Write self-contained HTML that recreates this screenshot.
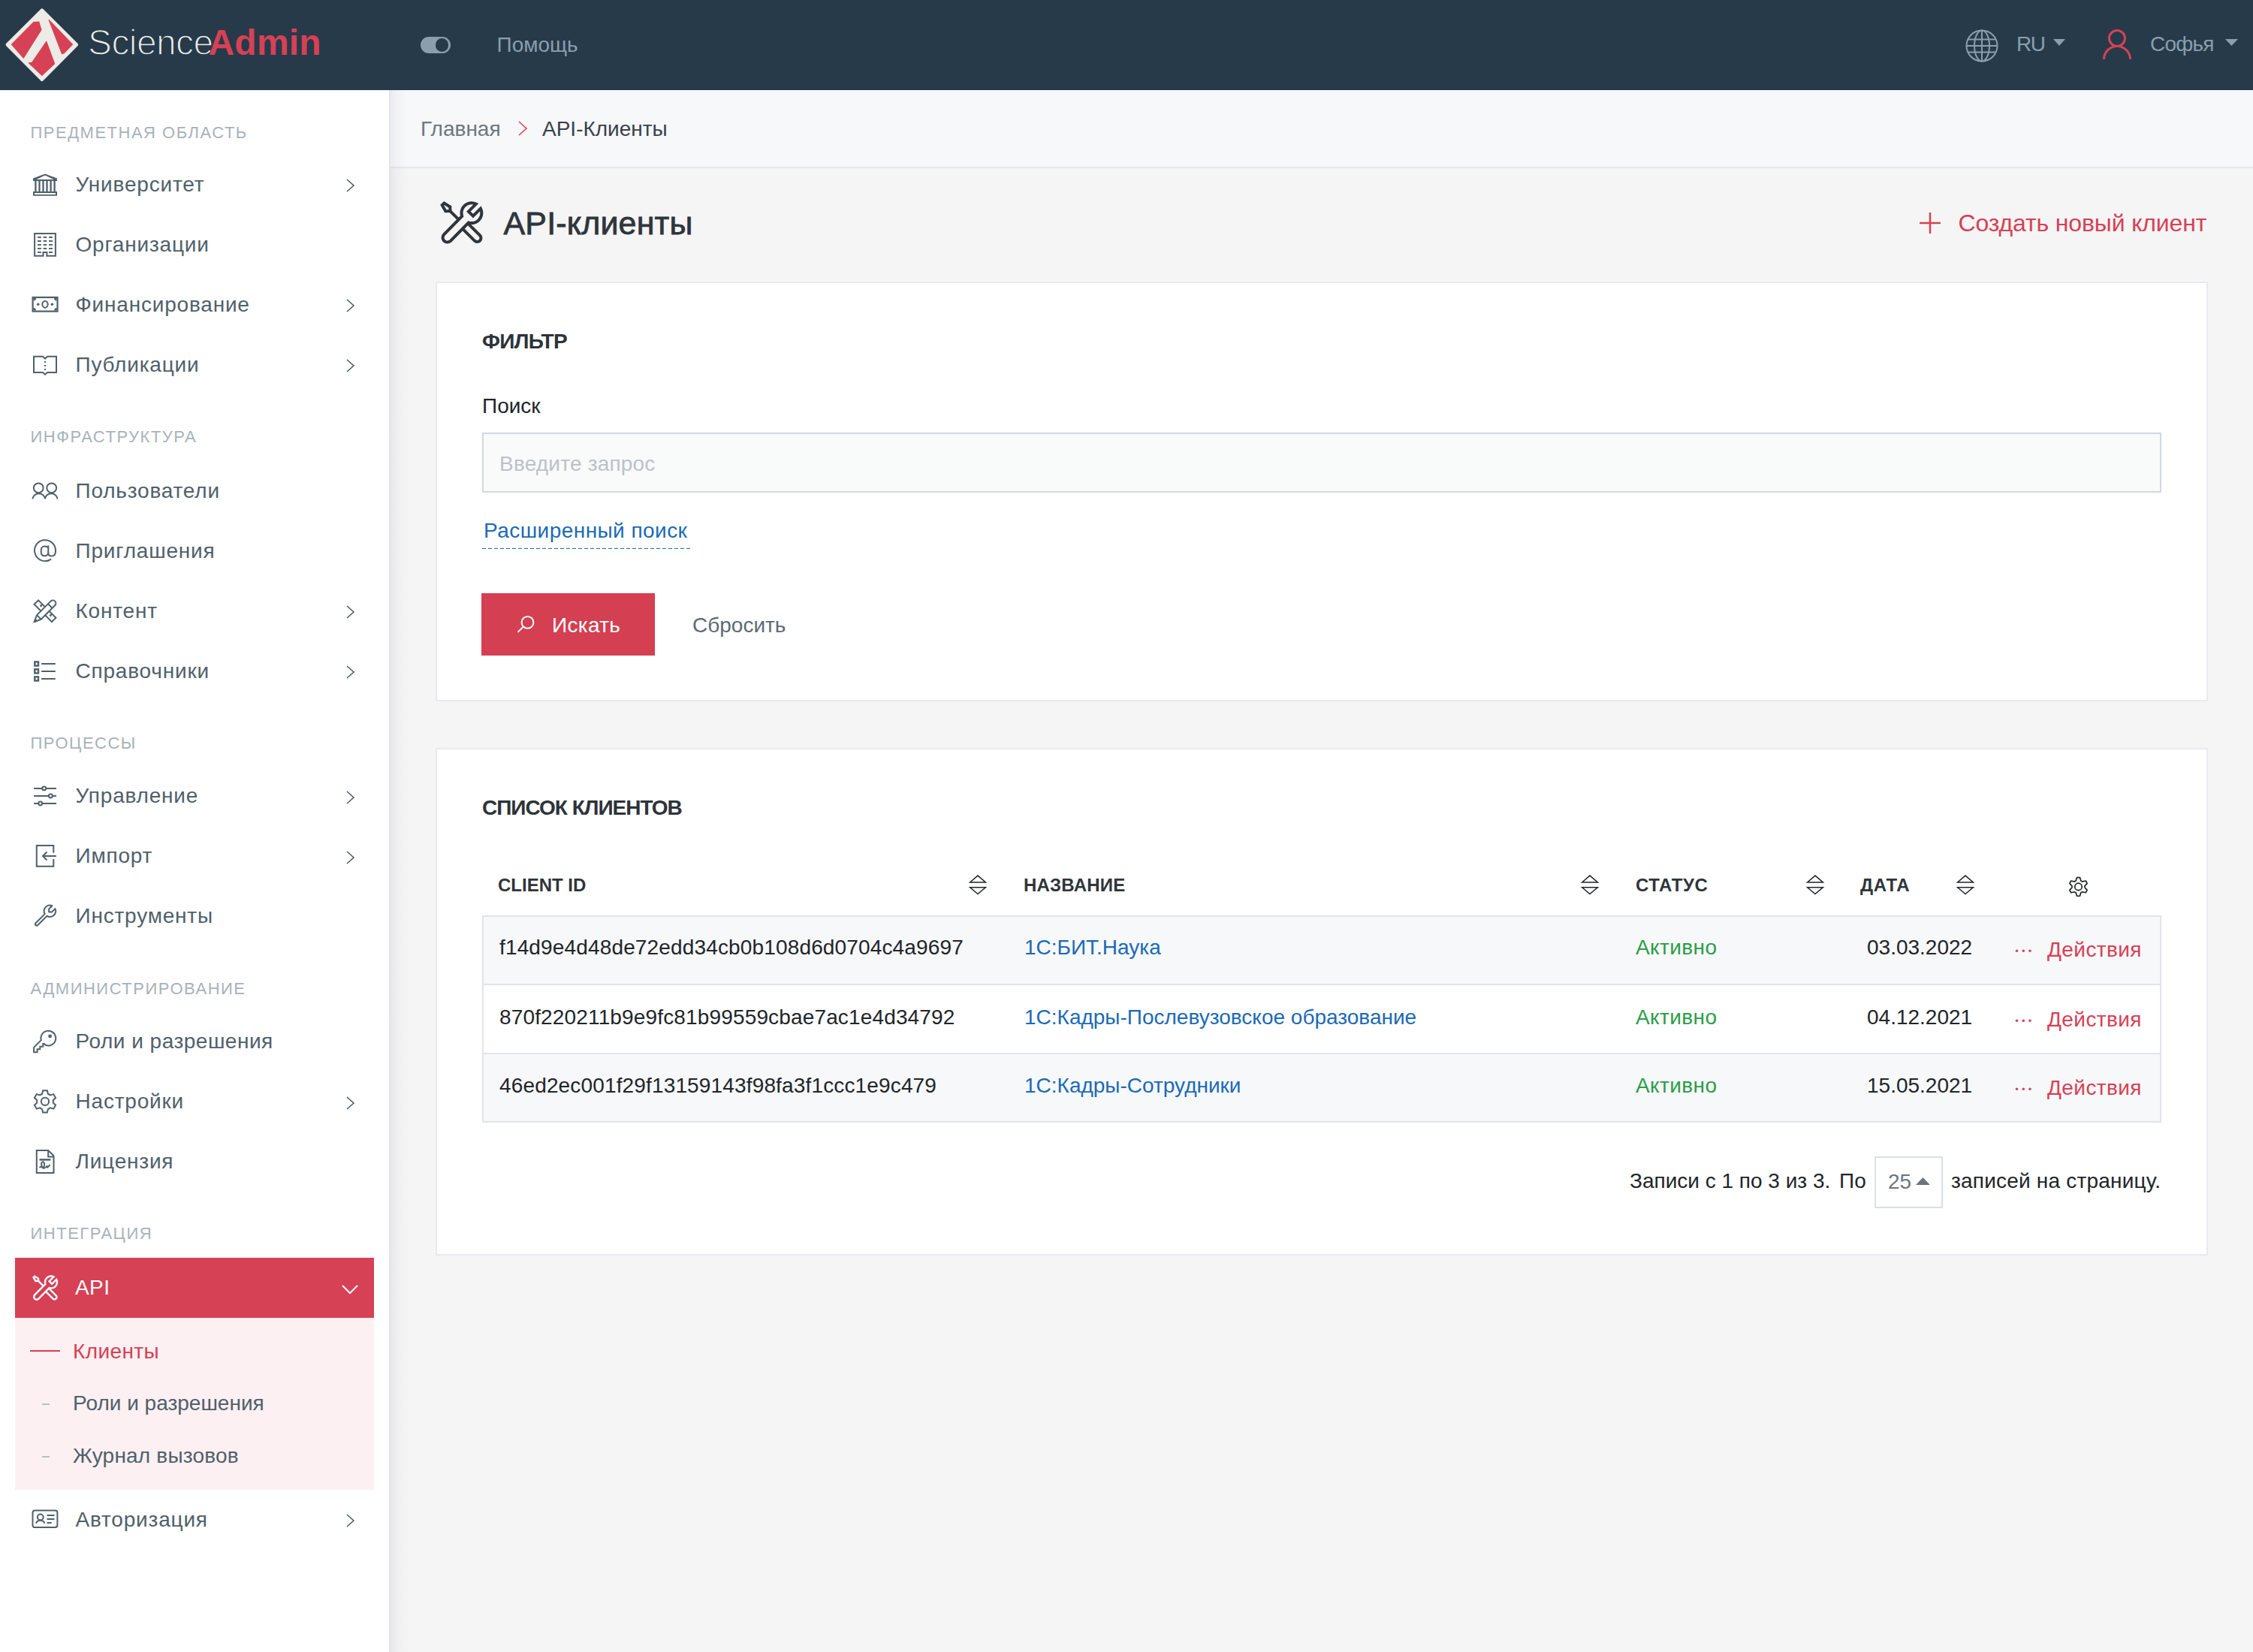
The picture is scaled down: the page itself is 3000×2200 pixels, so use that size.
<!DOCTYPE html>
<html><head><meta charset="utf-8"><style>
html,body{margin:0;padding:0;width:3000px;height:2200px;overflow:hidden;background:#f5f5f6}
body{position:relative;font-family:"Liberation Sans", sans-serif}
.t{position:absolute;white-space:nowrap;line-height:1;font-family:"Liberation Sans", sans-serif}
svg{overflow:visible}
</style></head><body>
<div style="position:absolute;left:0px;top:0px;width:3000px;height:2200px;background:#f5f5f5"></div>
<div style="position:absolute;left:0px;top:0px;width:3000px;height:120px;background:#263a4a"></div>
<div style="position:absolute;left:0px;top:120px;width:518px;height:2080px;background:#ffffff"></div>
<div style="position:absolute;left:520px;top:120px;width:2480px;height:102px;background:#f7f8fa"></div>
<div style="position:absolute;left:520px;top:222px;width:2480px;height:2px;background:#e6e8ef"></div>
<svg style="position:absolute;left:0px;top:0px;" width="112" height="120" viewBox="0 0 112 120"><path d="M55.9 14 L101.6 59.5 L55.9 105.6 L10.1 59.5 Z" fill="#ecebe6" stroke="#ecebe6" stroke-width="5" stroke-linejoin="round"/><g fill="#d64155" stroke="#d64155" stroke-width="1.2" stroke-linejoin="round"><path d="M15.5 59.2 L44.8 29.6 L51.8 29.2 L54.9 39.6 L31.3 77.2 Z"/><path d="M65.2 26.6 L96.5 59.2 L85.4 70.6 L82.6 71.8 Z"/><path d="M61.8 55.4 L72.6 84.8 L55.9 100.4 L38.4 83.9 L42.6 83.4 Z"/></g></svg>
<div class="t" style="left:117px;top:33.4px;font-size:48px;color:#ecebe6;font-weight:400;letter-spacing:-0.6px;-webkit-text-stroke:1.5px #263a4a">Science</div>
<div class="t" style="left:277.5px;top:33.4px;font-size:48px;color:#d64155;font-weight:700;letter-spacing:0.2px;">Admin</div>
<div style="position:absolute;left:560px;top:49px;width:40px;height:22px;background:#8a9eae;border-radius:11px"></div>
<div style="position:absolute;left:579.8px;top:51px;width:17.5px;height:17.5px;background:#263a4a;border-radius:50%"></div>
<div class="t" style="left:661.5px;top:45.5px;font-size:28px;color:#8a9eae;font-weight:400;letter-spacing:0px;">Помощь</div>
<svg style="position:absolute;left:2617px;top:39px;" width="44" height="44" viewBox="0 0 44 44"><g fill="none" stroke="#8a9eae" stroke-width="2"><circle cx="22" cy="22" r="20.5"/><ellipse cx="22" cy="22" rx="10" ry="20.5"/><line x1="22" y1="1.5" x2="22" y2="42.5"/><line x1="1.5" y1="22" x2="42.5" y2="22"/><line x1="3.5" y1="13.5" x2="40.5" y2="13.5"/><line x1="3.5" y1="30.5" x2="40.5" y2="30.5"/></g></svg>
<div class="t" style="left:2685px;top:45.3px;font-size:28px;color:#8a9eae;font-weight:400;letter-spacing:-1.5px;">RU</div>
<svg style="position:absolute;left:2734px;top:52px;" width="16" height="9" viewBox="0 0 16 9"><path d="M0 0 H16 L8 9 Z" fill="#8a9eae"/></svg>
<svg style="position:absolute;left:2800px;top:39px;" width="38" height="40" viewBox="0 0 38 40"><g fill="none" stroke="#d64155" stroke-width="3"><circle cx="19" cy="12" r="10.5"/><path d="M1.5 40 A17.5 17.5 0 0 1 36.5 40"/></g></svg>
<div class="t" style="left:2863px;top:45.3px;font-size:28px;color:#8a9eae;font-weight:400;letter-spacing:-0.8px;">Софья</div>
<svg style="position:absolute;left:2963px;top:52px;" width="17" height="9" viewBox="0 0 17 9"><path d="M0 0 H17 L8.5 9 Z" fill="#8a9eae"/></svg>
<div class="t" style="left:40.5px;top:165.7px;font-size:22px;color:#a8b2ba;font-weight:400;letter-spacing:1.5px;">ПРЕДМЕТНАЯ ОБЛАСТЬ</div>
<div class="t" style="left:100.5px;top:231.7px;font-size:28px;color:#50606b;font-weight:400;letter-spacing:0.8px;">Университет</div>
<svg style="position:absolute;left:460px;top:238.4px;" width="14" height="18" viewBox="0 0 14 18"><path d="M2 1 L11 9 L2 17" fill="none" stroke="#50606b" stroke-width="1.6"/></svg>
<div class="t" style="left:100.5px;top:311.7px;font-size:28px;color:#50606b;font-weight:400;letter-spacing:0.8px;">Организации</div>
<div class="t" style="left:100.5px;top:391.7px;font-size:28px;color:#50606b;font-weight:400;letter-spacing:0.8px;">Финансирование</div>
<svg style="position:absolute;left:460px;top:398.4px;" width="14" height="18" viewBox="0 0 14 18"><path d="M2 1 L11 9 L2 17" fill="none" stroke="#50606b" stroke-width="1.6"/></svg>
<div class="t" style="left:100.5px;top:471.7px;font-size:28px;color:#50606b;font-weight:400;letter-spacing:0.8px;">Публикации</div>
<svg style="position:absolute;left:460px;top:478.4px;" width="14" height="18" viewBox="0 0 14 18"><path d="M2 1 L11 9 L2 17" fill="none" stroke="#50606b" stroke-width="1.6"/></svg>
<div class="t" style="left:40.5px;top:571.0px;font-size:22px;color:#a8b2ba;font-weight:400;letter-spacing:1.5px;">ИНФРАСТРУКТУРА</div>
<div class="t" style="left:100.5px;top:639.7px;font-size:28px;color:#50606b;font-weight:400;letter-spacing:0.8px;">Пользователи</div>
<div class="t" style="left:100.5px;top:719.7px;font-size:28px;color:#50606b;font-weight:400;letter-spacing:0.8px;">Приглашения</div>
<div class="t" style="left:100.5px;top:799.7px;font-size:28px;color:#50606b;font-weight:400;letter-spacing:0.8px;">Контент</div>
<svg style="position:absolute;left:460px;top:806.4px;" width="14" height="18" viewBox="0 0 14 18"><path d="M2 1 L11 9 L2 17" fill="none" stroke="#50606b" stroke-width="1.6"/></svg>
<div class="t" style="left:100.5px;top:879.7px;font-size:28px;color:#50606b;font-weight:400;letter-spacing:0.8px;">Справочники</div>
<svg style="position:absolute;left:460px;top:886.4px;" width="14" height="18" viewBox="0 0 14 18"><path d="M2 1 L11 9 L2 17" fill="none" stroke="#50606b" stroke-width="1.6"/></svg>
<div class="t" style="left:40.5px;top:979.1px;font-size:22px;color:#a8b2ba;font-weight:400;letter-spacing:1.5px;">ПРОЦЕССЫ</div>
<div class="t" style="left:100.5px;top:1045.9px;font-size:28px;color:#50606b;font-weight:400;letter-spacing:0.8px;">Управление</div>
<svg style="position:absolute;left:460px;top:1052.6px;" width="14" height="18" viewBox="0 0 14 18"><path d="M2 1 L11 9 L2 17" fill="none" stroke="#50606b" stroke-width="1.6"/></svg>
<div class="t" style="left:100.5px;top:1125.9px;font-size:28px;color:#50606b;font-weight:400;letter-spacing:0.8px;">Импорт</div>
<svg style="position:absolute;left:460px;top:1132.6px;" width="14" height="18" viewBox="0 0 14 18"><path d="M2 1 L11 9 L2 17" fill="none" stroke="#50606b" stroke-width="1.6"/></svg>
<div class="t" style="left:100.5px;top:1205.9px;font-size:28px;color:#50606b;font-weight:400;letter-spacing:0.8px;">Инструменты</div>
<div class="t" style="left:40.5px;top:1306.4px;font-size:22px;color:#a8b2ba;font-weight:400;letter-spacing:1.5px;">АДМИНИСТРИРОВАНИЕ</div>
<div class="t" style="left:100.5px;top:1372.9px;font-size:28px;color:#50606b;font-weight:400;letter-spacing:0.5px;">Роли и разрешения</div>
<div class="t" style="left:100.5px;top:1452.9px;font-size:28px;color:#50606b;font-weight:400;letter-spacing:0.8px;">Настройки</div>
<svg style="position:absolute;left:460px;top:1459.6px;" width="14" height="18" viewBox="0 0 14 18"><path d="M2 1 L11 9 L2 17" fill="none" stroke="#50606b" stroke-width="1.6"/></svg>
<div class="t" style="left:100.5px;top:1532.9px;font-size:28px;color:#50606b;font-weight:400;letter-spacing:0.8px;">Лицензия</div>
<div class="t" style="left:40.5px;top:1631.9px;font-size:22px;color:#a8b2ba;font-weight:400;letter-spacing:1.5px;">ИНТЕГРАЦИЯ</div>
<div style="position:absolute;left:20px;top:1675px;width:478px;height:80px;background:#d64155"></div>
<div class="t" style="left:100px;top:1701.2px;font-size:28px;color:#ffffff;font-weight:400;letter-spacing:0.4px;">API</div>
<svg style="position:absolute;left:455px;top:1711px;" width="22" height="13" viewBox="0 0 22 13"><path d="M1 1 L11 11 L21 1" fill="none" stroke="#fff" stroke-width="2"/></svg>
<div style="position:absolute;left:20px;top:1755px;width:478px;height:229px;background:#fdf0f2"></div>
<div style="position:absolute;left:40px;top:1797.5px;width:40px;height:2.5px;background:#d64155"></div>
<div class="t" style="left:97px;top:1786.3px;font-size:28px;color:#d64155;font-weight:400;letter-spacing:0.4px;">Клиенты</div>
<div style="position:absolute;left:56px;top:1868.5px;width:10px;height:2px;background:#b7bfc5"></div>
<div class="t" style="left:97px;top:1854.8px;font-size:28px;color:#50606b;font-weight:400;letter-spacing:0px;">Роли и разрешения</div>
<div style="position:absolute;left:56px;top:1938.5px;width:10px;height:2px;background:#b7bfc5"></div>
<div class="t" style="left:97px;top:1924.9px;font-size:28px;color:#50606b;font-weight:400;letter-spacing:0.2px;">Журнал вызовов</div>
<div class="t" style="left:100.5px;top:2009.6px;font-size:28px;color:#50606b;font-weight:400;letter-spacing:0.8px;">Авторизация</div>
<svg style="position:absolute;left:460px;top:2016.3px;" width="14" height="18" viewBox="0 0 14 18"><path d="M2 1 L11 9 L2 17" fill="none" stroke="#50606b" stroke-width="1.6"/></svg>
<div class="t" style="left:560px;top:157.7px;font-size:28px;color:#6c7780;font-weight:400;letter-spacing:0px;">Главная</div>
<svg style="position:absolute;left:689px;top:161px;" width="14" height="20" viewBox="0 0 14 20"><path d="M2 1 L12 10 L2 19" fill="none" stroke="#d64155" stroke-width="1.6"/></svg>
<div class="t" style="left:722px;top:157.7px;font-size:28px;color:#37424b;font-weight:400;letter-spacing:0px;">API-Клиенты</div>
<div class="t" style="left:670.5px;top:276.0px;font-size:43px;color:#2f353b;font-weight:400;letter-spacing:0.15px;-webkit-text-stroke:0.8px #2f353b">API-клиенты</div>
<div class="t" style="left:2607.5px;top:280.7px;font-size:32px;color:#d64155;font-weight:400;letter-spacing:-0.15px;">Создать новый клиент</div>
<svg style="position:absolute;left:2556px;top:283px;" width="28" height="28" viewBox="0 0 28 28"><path d="M14 0 V28 M0 14 H28" stroke="#d64155" stroke-width="2.5"/></svg>
<div style="position:absolute;left:580px;top:375px;width:2360px;height:559px;background:#fff;border:2px solid #e9e9f1;box-sizing:border-box"></div>
<div class="t" style="left:642px;top:440.9px;font-size:28px;color:#2d3339;font-weight:700;letter-spacing:-0.6px;">ФИЛЬТР</div>
<div class="t" style="left:642px;top:526.6px;font-size:28px;color:#212529;font-weight:400;letter-spacing:0px;">Поиск</div>
<div style="position:absolute;left:642px;top:576px;width:2236px;height:80px;background:#f9fafa;border:2px solid #d1d8df;box-sizing:border-box"></div>
<div class="t" style="left:665px;top:604.3px;font-size:28px;color:#bcc2c8;font-weight:400;letter-spacing:0.2px;">Введите запрос</div>
<div class="t" style="left:644px;top:693.3px;font-size:28px;color:#1b6ab5;font-weight:400;letter-spacing:0.45px;">Расширенный поиск</div>
<div style="position:absolute;left:642px;top:729.6px;width:277px;height:1.6px;background:repeating-linear-gradient(90deg,#1b6ab5 0 4.6px,transparent 4.6px 8px)"></div>
<div style="position:absolute;left:641px;top:790px;width:231px;height:83px;background:#d43f52"></div>
<svg style="position:absolute;left:686px;top:820px;" width="26" height="24" viewBox="0 0 26 24"><g fill="none" stroke="#fff" stroke-width="2"><circle cx="16.5" cy="8.9" r="7.9"/><path d="M10.8 14.6 L3.5 21.9"/></g></svg>
<div class="t" style="left:735px;top:819.1px;font-size:28px;color:#ffffff;font-weight:400;letter-spacing:0.3px;">Искать</div>
<div class="t" style="left:922px;top:819.1px;font-size:28px;color:#5d6a74;font-weight:400;letter-spacing:0px;">Сбросить</div>
<div style="position:absolute;left:580px;top:996px;width:2360px;height:676px;background:#fff;border:2px solid #e9e9f1;box-sizing:border-box"></div>
<div class="t" style="left:642px;top:1061.7px;font-size:28px;color:#2d3339;font-weight:700;letter-spacing:-1px;">СПИСОК КЛИЕНТОВ</div>
<div class="t" style="left:663px;top:1166.7px;font-size:24px;color:#2f353b;font-weight:700;letter-spacing:0px;">CLIENT ID</div>
<svg style="position:absolute;left:1290px;top:1164px;" width="24" height="28" viewBox="0 0 24 28"><g fill="none" stroke="#212529" stroke-width="1.5"><path d="M1.6 11 L12 2.1 L22.4 11 Z"/><path d="M1.6 17.7 L12 26.6 L22.4 17.7 Z"/></g></svg>
<div class="t" style="left:1363px;top:1166.7px;font-size:24px;color:#2f353b;font-weight:700;letter-spacing:0.2px;">НАЗВАНИЕ</div>
<svg style="position:absolute;left:2105px;top:1164px;" width="24" height="28" viewBox="0 0 24 28"><g fill="none" stroke="#212529" stroke-width="1.5"><path d="M1.6 11 L12 2.1 L22.4 11 Z"/><path d="M1.6 17.7 L12 26.6 L22.4 17.7 Z"/></g></svg>
<div class="t" style="left:2178px;top:1166.7px;font-size:24px;color:#2f353b;font-weight:700;letter-spacing:0.6px;">СТАТУС</div>
<svg style="position:absolute;left:2405px;top:1164px;" width="24" height="28" viewBox="0 0 24 28"><g fill="none" stroke="#212529" stroke-width="1.5"><path d="M1.6 11 L12 2.1 L22.4 11 Z"/><path d="M1.6 17.7 L12 26.6 L22.4 17.7 Z"/></g></svg>
<div class="t" style="left:2477px;top:1166.7px;font-size:24px;color:#2f353b;font-weight:700;letter-spacing:0.6px;">ДАТА</div>
<svg style="position:absolute;left:2605px;top:1164px;" width="24" height="28" viewBox="0 0 24 28"><g fill="none" stroke="#212529" stroke-width="1.5"><path d="M1.6 11 L12 2.1 L22.4 11 Z"/><path d="M1.6 17.7 L12 26.6 L22.4 17.7 Z"/></g></svg>
<div style="position:absolute;left:642px;top:1219px;width:2236px;height:2px;background:#e1e4e8"></div>
<div style="position:absolute;left:642px;top:1221px;width:2236px;height:90px;background:#f7f8fa"></div>
<div style="position:absolute;left:642px;top:1310px;width:2236px;height:2px;background:#e1e4e8"></div>
<div class="t" style="left:665px;top:1248.3px;font-size:28px;color:#212529;font-weight:400;letter-spacing:0.15px;">f14d9e4d48de72edd34cb0b108d6d0704c4a9697</div>
<div class="t" style="left:1364px;top:1248.3px;font-size:28px;color:#1b6ab5;font-weight:400;letter-spacing:0px;">1C:БИТ.Наука</div>
<div class="t" style="left:2178px;top:1248.3px;font-size:28px;color:#2b9d47;font-weight:400;letter-spacing:0.4px;">Активно</div>
<div class="t" style="left:2486px;top:1248.3px;font-size:28px;color:#212529;font-weight:400;letter-spacing:0px;">03.03.2022</div>
<svg style="position:absolute;left:2680px;top:1260px;" width="30" height="12" viewBox="0 0 30 12"><g fill="#d64155"><circle cx="5.5" cy="6.3" r="1.75"/><circle cx="14.3" cy="6.3" r="1.75"/><circle cx="23" cy="6.3" r="1.75"/></g></svg>
<div class="t" style="left:2726px;top:1250.8px;font-size:28px;color:#d64155;font-weight:400;letter-spacing:0.4px;">Действия</div>
<div style="position:absolute;left:642px;top:1312px;width:2236px;height:91.5px;background:#ffffff"></div>
<div style="position:absolute;left:642px;top:1401.5px;width:2236px;height:2px;background:#e1e4e8"></div>
<div class="t" style="left:665px;top:1341.3px;font-size:28px;color:#212529;font-weight:400;letter-spacing:0.15px;">870f220211b9e9fc81b99559cbae7ac1e4d34792</div>
<div class="t" style="left:1364px;top:1341.3px;font-size:28px;color:#1b6ab5;font-weight:400;letter-spacing:0px;">1C:Кадры-Послевузовское образование</div>
<div class="t" style="left:2178px;top:1341.3px;font-size:28px;color:#2b9d47;font-weight:400;letter-spacing:0.4px;">Активно</div>
<div class="t" style="left:2486px;top:1341.3px;font-size:28px;color:#212529;font-weight:400;letter-spacing:0px;">04.12.2021</div>
<svg style="position:absolute;left:2680px;top:1353px;" width="30" height="12" viewBox="0 0 30 12"><g fill="#d64155"><circle cx="5.5" cy="6.3" r="1.75"/><circle cx="14.3" cy="6.3" r="1.75"/><circle cx="23" cy="6.3" r="1.75"/></g></svg>
<div class="t" style="left:2726px;top:1343.8px;font-size:28px;color:#d64155;font-weight:400;letter-spacing:0.4px;">Действия</div>
<div style="position:absolute;left:642px;top:1403.5px;width:2236px;height:91.5px;background:#f7f8fa"></div>
<div style="position:absolute;left:642px;top:1493.0px;width:2236px;height:2px;background:#e1e4e8"></div>
<div class="t" style="left:665px;top:1432.3px;font-size:28px;color:#212529;font-weight:400;letter-spacing:0.15px;">46ed2ec001f29f13159143f98fa3f1ccc1e9c479</div>
<div class="t" style="left:1364px;top:1432.3px;font-size:28px;color:#1b6ab5;font-weight:400;letter-spacing:0px;">1C:Кадры-Сотрудники</div>
<div class="t" style="left:2178px;top:1432.3px;font-size:28px;color:#2b9d47;font-weight:400;letter-spacing:0.4px;">Активно</div>
<div class="t" style="left:2486px;top:1432.3px;font-size:28px;color:#212529;font-weight:400;letter-spacing:0px;">15.05.2021</div>
<svg style="position:absolute;left:2680px;top:1444px;" width="30" height="12" viewBox="0 0 30 12"><g fill="#d64155"><circle cx="5.5" cy="6.3" r="1.75"/><circle cx="14.3" cy="6.3" r="1.75"/><circle cx="23" cy="6.3" r="1.75"/></g></svg>
<div class="t" style="left:2726px;top:1434.8px;font-size:28px;color:#d64155;font-weight:400;letter-spacing:0.4px;">Действия</div>
<div style="position:absolute;left:642px;top:1221px;width:2px;height:274px;background:#e1e4e8"></div>
<div style="position:absolute;left:2876px;top:1221px;width:2px;height:274px;background:#e1e4e8"></div>
<div class="t" style="left:2170px;top:1558.7px;font-size:28px;color:#212529;font-weight:400;letter-spacing:0px;">Записи с 1 по 3 из 3.</div>
<div class="t" style="left:2449px;top:1558.7px;font-size:28px;color:#212529;font-weight:400;letter-spacing:0px;">По</div>
<div style="position:absolute;left:2496px;top:1540px;width:91px;height:69px;background:#fff;border:2px solid #dcdfe3;box-sizing:border-box"></div>
<div class="t" style="left:2514px;top:1559.7px;font-size:28px;color:#6c757d;font-weight:400;letter-spacing:0px;">25</div>
<svg style="position:absolute;left:2551px;top:1568px;" width="19" height="10" viewBox="0 0 19 10"><path d="M0 10 L9.5 0 L19 10 Z" fill="#6c757d"/></svg>
<div class="t" style="left:2598px;top:1558.7px;font-size:28px;color:#212529;font-weight:400;letter-spacing:0.2px;">записей на страницу.</div>
<div style="position:absolute;left:518px;top:120px;width:26px;height:2080px;background:linear-gradient(90deg, rgba(60,60,110,0.11) 0px, rgba(60,60,110,0.07) 2px, rgba(60,60,90,0.035) 10px, rgba(60,60,90,0.012) 18px, rgba(0,0,0,0) 26px)"></div>
<svg style="position:absolute;left:0;top:0" width="3000" height="2200" viewBox="0 0 3000 2200"><g transform="translate(44,230)"><g fill="#50606b"><path fill-rule="evenodd" d="M0 7.4 L16 1.6 L32 7.4 V10.9 H0 Z M4.5 8.9 L16 3.6 L27.5 8.9 Z"/><rect x="2.25" y="10.9" width="2.3" height="14.3"/><rect x="7.35" y="10.9" width="2.3" height="14.3"/><rect x="12.35" y="10.9" width="2.3" height="14.3"/><rect x="17.35" y="10.9" width="2.3" height="14.3"/><rect x="22.45" y="10.9" width="2.3" height="14.3"/><rect x="27.45" y="10.9" width="2.3" height="14.3"/><path fill-rule="evenodd" d="M0 25 H32 V30.7 H0 Z M2 27 H30 V28.9 H2 Z"/></g></g><g transform="translate(44,308)"><path d="M13.5 32.8 H2.1 V3 H29.9 V32.8 H18.4 V28 H13.5 Z" fill="none" stroke="#50606b" stroke-width="2"/><g fill="#50606b"><rect x="6" y="7.05" width="4.9" height="1.9"/><rect x="13.6" y="7.05" width="4.7" height="1.9"/><rect x="21" y="7.05" width="5" height="1.9"/><rect x="6" y="12.05" width="4.9" height="1.9"/><rect x="13.6" y="12.05" width="4.7" height="1.9"/><rect x="21" y="12.05" width="5" height="1.9"/><rect x="6" y="17.05" width="4.9" height="1.9"/><rect x="13.6" y="17.05" width="4.7" height="1.9"/><rect x="21" y="17.05" width="5" height="1.9"/><rect x="6" y="22.05" width="4.9" height="1.9"/><rect x="13.6" y="22.05" width="4.7" height="1.9"/><rect x="21" y="22.05" width="5" height="1.9"/><rect x="6" y="27.05" width="4.9" height="1.9"/><rect x="21" y="27.05" width="5" height="1.9"/></g></g><g transform="translate(42,393)"><rect x="1.6" y="3" width="32.9" height="18.6" fill="none" stroke="#50606b" stroke-width="2.2"/><g fill="#50606b"><path d="M2.5 4 H6 A3.5 3.5 0 0 1 2.5 7.5 Z"/><path d="M33.6 4 H30.1 A3.5 3.5 0 0 0 33.6 7.5 Z"/><path d="M2.5 20.6 H6 A3.5 3.5 0 0 0 2.5 17.1 Z"/><path d="M33.6 20.6 H30.1 A3.5 3.5 0 0 1 33.6 17.1 Z"/><circle cx="8.7" cy="12.3" r="1.8"/><circle cx="27.4" cy="12.3" r="1.8"/></g><ellipse cx="18" cy="12.3" rx="3.7" ry="4.4" fill="none" stroke="#50606b" stroke-width="2"/></g><g transform="translate(44,472)"><path d="M1 2.8 H13 L16 5.6 L19 2.8 H31 V23.9 H19 L16 26.7 L13 23.9 H1 Z" fill="none" stroke="#50606b" stroke-width="2"/><g fill="#50606b"><rect x="15" y="9" width="2" height="2"/><rect x="15" y="14" width="2" height="2"/><rect x="15" y="19" width="2" height="2"/></g></g><g transform="translate(42,640)"><g fill="none" stroke="#50606b" stroke-width="2"><circle cx="9.25" cy="9.8" r="6.4"/><circle cx="26.7" cy="9.8" r="6.4"/><path d="M1.5 24.5 A8.25 7.2 0 0 1 18 24.5 A8.25 7.2 0 0 1 34.5 24.5"/></g></g><g transform="translate(44,718)"><g fill="none" stroke="#50606b" stroke-width="2"><path d="M24.1 26.6 A14 14 0 1 1 30 16 C30 20 28 22.5 24.7 22.5 C22 22.5 20.3 21 20.3 18.5 V8.6"/><path d="M20.3 11.5 C19.3 10.2 17.5 9.6 15.5 9.6 C12.5 9.6 10.8 11.8 10.8 14.5 V17.5 C10.8 20.3 12.5 22.3 15.3 22.3 C18.2 22.3 20.3 20.3 20.3 17.5"/></g></g><g transform="translate(44,797)"><g transform="rotate(45 16 16.8)" fill="none" stroke="#50606b" stroke-width="2"><rect x="-0.5" y="12.95" width="33" height="7.7"/><path d="M7 12.95 V16 H8.6 M25 12.95 V16 H26.6"/></g><g transform="translate(16 16.8) rotate(-45)"><path d="M-20.5 0 L-11.5 -4 H14.6 A4 4 0 0 1 14.6 4 H-11.5 Z" fill="#fff" stroke="#50606b" stroke-width="2" stroke-linejoin="round"/><path d="M-11.5 -4 V4 M9.5 -4 V4" stroke="#50606b" stroke-width="2"/><path d="M-20.5 0 L-16 -2 V2 Z" fill="#50606b"/></g></g><g transform="translate(44,878)"><g fill="none" stroke="#50606b" stroke-width="2.4"><rect x="2.3" y="3.4" width="4.7" height="5.2"/><rect x="2.3" y="13.3" width="4.7" height="5.2"/><rect x="2.3" y="23.3" width="4.7" height="5.2"/></g><g stroke="#50606b" stroke-width="2"><path d="M11.1 6 H29.8 M11.1 16 H29.8 M11.1 26 H29.8"/></g></g><g transform="translate(44,1040)"><g stroke="#50606b" stroke-width="2"><path d="M1.1 9.9 H31 M1.1 20 H31 M1.1 30 H31"/><circle cx="14.7" cy="9.9" r="2.4" fill="#fff"/><circle cx="23.4" cy="20" r="2.4" fill="#fff"/><circle cx="9.7" cy="30" r="2.4" fill="#fff"/></g></g><g transform="translate(44,1124)"><g fill="none" stroke="#50606b" stroke-width="2"><path d="M27.3 11.8 V2 H4.8 V29.7 H27.3 V20.1"/><path d="M30.9 16 H13"/><path d="M18.5 10.5 L13 16 L18.5 21.5"/></g></g><g transform="translate(44,1200)"><g transform="translate(4.9 30.7) rotate(-45)"><path d="M17.25 -1.95 H0 A1.95 1.95 0 0 0 0 1.95 H17.25 A7.7 7.7 0 0 0 31.87 2.8 H25.8 L23 0 L25.8 -2.8 H31.87 A7.7 7.7 0 0 0 17.25 -1.95 Z" fill="none" stroke="#50606b" stroke-width="2" stroke-linejoin="round"/></g></g><g transform="translate(43.2,1368.5)"><path d="M11.6 16.6 L1.9 26.3 V32.8 H6.4 V28.8 H10.1 V25.3 H14.1 V21.5 L15.6 21.5 L17.6 23.3 A9.9 9.9 0 1 0 11.6 16.6 Z" fill="none" stroke="#50606b" stroke-width="2"/><circle cx="23.4" cy="11.4" r="2.4" fill="#50606b"/></g><g transform="translate(0,0)"><path d="M56.08 1456.73 L57.15 1452.27 L62.85 1452.27 L63.92 1456.73 L66.85 1458.42 L71.24 1457.12 L74.09 1462.05 L70.77 1465.21 L70.77 1468.59 L74.09 1471.75 L71.24 1476.68 L66.85 1475.38 L63.92 1477.07 L62.85 1481.53 L57.15 1481.53 L56.08 1477.07 L53.15 1475.38 L48.76 1476.68 L45.91 1471.75 L49.23 1468.59 L49.23 1465.21 L45.91 1462.05 L48.76 1457.12 L53.15 1458.42 Z" fill="none" stroke="#50606b" stroke-width="2" stroke-linejoin="miter" stroke-miterlimit="3"/><circle cx="60" cy="1466.9" r="5.1" fill="none" stroke="#50606b" stroke-width="2"/></g><g transform="translate(44,1528)"><g fill="none" stroke="#50606b" stroke-width="2"><path d="M4.8 4 H20.3 L27.5 11.2 V33.9 H4.8 Z"/><path d="M20.2 4 V12.5 H27.5"/><path d="M8.5 16.4 H23.4" stroke-width="2.5"/><path d="M8.6 27 Q11 25 12 26.2 Q14 27.5 15 24 Q15.5 19.5 13 19.2 Q10.8 19.2 11.2 23 Q11.8 28.2 15 27.6 Q17 27 18.5 25 L19.3 26.5 Q21 25.5 22.5 23"/></g></g><g transform="translate(39.46,1693.35) scale(0.596)"><g stroke="#fff"><g fill="none" stroke-width="4" stroke-linejoin="miter"><path d="M35.18 27.92 L35.18 27.92 L34.96 27.17 L34.78 26.4 L34.64 25.63 L34.55 24.84 L34.5 24.06 L34.51 23.27 L34.56 22.49 L34.65 21.7 L34.79 20.93 L34.97 20.16 L35.2 19.41 L35.48 18.67 L35.8 17.95 L36.15 17.25 L36.55 16.57 L36.99 15.92 L37.47 15.29 L37.98 14.69 L38.52 14.13 L39.1 13.59 L39.71 13.09 L40.35 12.63 L41.01 12.21 L41.7 11.82 L42.41 11.48 L43.13 11.18 L43.88 10.92 L44.63 10.7 L45.4 10.53 L46.18 10.41 L46.96 10.33 L47.75 10.3 L48.54 10.32 L49.32 10.38 L50.1 10.48 L50.87 10.63 L51.64 10.83 L52.38 11.07 L53.12 11.36 L53.83 11.69 L43.87 21.65 L49.95 27.73 L59.91 17.77 L60.34 18.72 L60.69 19.7 L60.96 20.71 L61.15 21.73 L61.27 22.77 L61.3 23.81 L61.25 24.85 L61.12 25.89 L60.91 26.91 L60.62 27.91 L60.26 28.88 L59.82 29.83 L59.3 30.74 L58.72 31.6 L58.07 32.42 L57.37 33.18 L56.6 33.89 L55.78 34.54 L54.91 35.12 L54.01 35.63 L53.06 36.07 L52.08 36.43 L51.08 36.72 L50.06 36.92 L49.02 37.05 L47.98 37.1 L46.94 37.07 L45.91 36.95 L44.88 36.76 L43.88 36.48 L20.05 60.68 L19.13 61.45 L18.08 62.02 L16.94 62.37 L15.75 62.5 L14.56 62.39 L13.41 62.05 L12.35 61.5 L11.42 60.75 L10.65 59.83 L10.08 58.78 L9.73 57.64 L9.6 56.45 L9.71 55.26 L10.05 54.11 L10.6 53.05 L11.35 52.12 Z"/><path d="M42.92 37.45 L58.94 53.46 L58.94 53.46 L59.56 54.22 L60.02 55.09 L60.3 56.02 L60.4 57 L60.3 57.98 L60.02 58.91 L59.56 59.78 L58.94 60.54 L58.18 61.16 L57.31 61.62 L56.38 61.9 L55.4 62 L54.42 61.9 L53.49 61.62 L52.62 61.16 L51.86 60.54 L35.9 44.58"/><path d="M19.4 21.1 L30.74 32.44"/><path d="M8.69 13.14 L11.36 10.59 L19.28 15.47 L19.49 20.97 L13.35 21.19 Z"/></g></g></g><g transform="translate(580.0,260.0)"><g stroke="#2f353b"><g fill="none" stroke-width="4" stroke-linejoin="miter"><path d="M35.18 27.92 L35.18 27.92 L34.96 27.17 L34.78 26.4 L34.64 25.63 L34.55 24.84 L34.5 24.06 L34.51 23.27 L34.56 22.49 L34.65 21.7 L34.79 20.93 L34.97 20.16 L35.2 19.41 L35.48 18.67 L35.8 17.95 L36.15 17.25 L36.55 16.57 L36.99 15.92 L37.47 15.29 L37.98 14.69 L38.52 14.13 L39.1 13.59 L39.71 13.09 L40.35 12.63 L41.01 12.21 L41.7 11.82 L42.41 11.48 L43.13 11.18 L43.88 10.92 L44.63 10.7 L45.4 10.53 L46.18 10.41 L46.96 10.33 L47.75 10.3 L48.54 10.32 L49.32 10.38 L50.1 10.48 L50.87 10.63 L51.64 10.83 L52.38 11.07 L53.12 11.36 L53.83 11.69 L43.87 21.65 L49.95 27.73 L59.91 17.77 L60.34 18.72 L60.69 19.7 L60.96 20.71 L61.15 21.73 L61.27 22.77 L61.3 23.81 L61.25 24.85 L61.12 25.89 L60.91 26.91 L60.62 27.91 L60.26 28.88 L59.82 29.83 L59.3 30.74 L58.72 31.6 L58.07 32.42 L57.37 33.18 L56.6 33.89 L55.78 34.54 L54.91 35.12 L54.01 35.63 L53.06 36.07 L52.08 36.43 L51.08 36.72 L50.06 36.92 L49.02 37.05 L47.98 37.1 L46.94 37.07 L45.91 36.95 L44.88 36.76 L43.88 36.48 L20.05 60.68 L19.13 61.45 L18.08 62.02 L16.94 62.37 L15.75 62.5 L14.56 62.39 L13.41 62.05 L12.35 61.5 L11.42 60.75 L10.65 59.83 L10.08 58.78 L9.73 57.64 L9.6 56.45 L9.71 55.26 L10.05 54.11 L10.6 53.05 L11.35 52.12 Z"/><path d="M42.92 37.45 L58.94 53.46 L58.94 53.46 L59.56 54.22 L60.02 55.09 L60.3 56.02 L60.4 57 L60.3 57.98 L60.02 58.91 L59.56 59.78 L58.94 60.54 L58.18 61.16 L57.31 61.62 L56.38 61.9 L55.4 62 L54.42 61.9 L53.49 61.62 L52.62 61.16 L51.86 60.54 L35.9 44.58"/><path d="M19.4 21.1 L30.74 32.44"/><path d="M8.69 13.14 L11.36 10.59 L19.28 15.47 L19.49 20.97 L13.35 21.19 Z"/></g></g></g><g transform="translate(42,2008)"><g fill="none" stroke="#50606b" stroke-width="2"><rect x="1.5" y="3.6" width="32.9" height="22.5" rx="3"/><circle cx="11.8" cy="12.4" r="3.9"/><path d="M6 20.6 A5.9 5.2 0 0 1 17.4 20.6"/><path d="M20.5 9.9 H30.5 M20.5 15 H30.5 M20.5 19.9 H26.7"/></g></g><g transform="translate(0,0)"><path d="M2764.18 1172.97 L2765.53 1168.56 L2769.47 1168.56 L2770.82 1172.97 L2772.71 1174.06 L2777.2 1173.02 L2779.18 1176.44 L2776.03 1179.81 L2776.03 1181.99 L2779.18 1185.36 L2777.2 1188.78 L2772.71 1187.74 L2770.82 1188.83 L2769.47 1193.24 L2765.53 1193.24 L2764.18 1188.83 L2762.29 1187.74 L2757.8 1188.78 L2755.82 1185.36 L2758.97 1181.99 L2758.97 1179.81 L2755.82 1176.44 L2757.8 1173.02 L2762.29 1174.06 Z" fill="none" stroke="#212529" stroke-width="1.7" stroke-linejoin="round"/><circle cx="2767.5" cy="1180.9" r="4.7" fill="none" stroke="#212529" stroke-width="1.7"/></g></svg>
<script>(function(){var w=window.innerWidth;if(w&&Math.abs(w-3000)>2){document.documentElement.style.zoom=w/3000;}})();</script>
</body></html>
